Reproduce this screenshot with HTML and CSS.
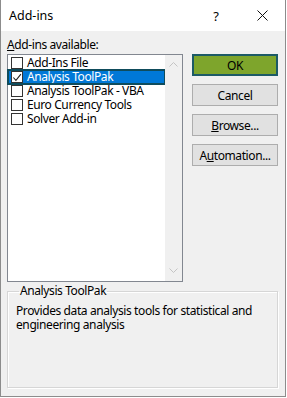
FILE: index.html
```html
<!DOCTYPE html>
<html>
<head>
<meta charset="utf-8">
<link rel="stylesheet" href="styles.css">
</head>
<body>
<div class="window">
  <div class="titlebar">
    <span class="title">Add-ins</span>
    <span class="help">?</span>
    <span class="close">
      <svg width="11" height="11" viewBox="0 0 11 11"><path d="M0.5 0.5 L10.5 10.5 M10.5 0.5 L0.5 10.5" stroke="#111" stroke-width="1" fill="none"/></svg>
    </span>
  </div>
  <div class="content">
    <div class="main">
      <div class="leftcol">
        <div class="label"><u>A</u>dd-ins available:</div>
        <div class="listbox">
          <div class="items">
            <div class="item"><span class="cb"></span><span>Add-Ins File</span></div>
            <div class="item selected"><span class="cb checked"><svg width="11" height="11" viewBox="0 0 11 11"><path d="M1.5 5.5 L4.3 8.6 L9.8 1.8" stroke="#222" stroke-width="1.2" fill="none"/></svg></span><span>Analysis ToolPak</span></div>
            <div class="item"><span class="cb"></span><span>Analysis ToolPak - VBA</span></div>
            <div class="item"><span class="cb"></span><span>Euro Currency Tools</span></div>
            <div class="item"><span class="cb"></span><span>Solver Add-in</span></div>
          </div>
          <div class="scrollbar">
            <svg class="arrow" width="9" height="5" viewBox="0 0 9 5"><path d="M0.5 4.5 L4.5 0.5 L8.5 4.5" stroke="#c4c4c4" stroke-width="1" fill="none"/></svg>
            <svg class="arrow" width="9" height="5" viewBox="0 0 9 5"><path d="M0.5 0.5 L4.5 4.5 L8.5 0.5" stroke="#c4c4c4" stroke-width="1" fill="none"/></svg>
          </div>
        </div>
      </div>
      <div class="buttons">
        <div class="btn default">OK</div>
        <div class="btn">Cancel</div>
        <div class="btn"><u>B</u>rowse...</div>
        <div class="btn">A<u>u</u>tomation...</div>
      </div>
    </div>
    <fieldset class="group">
      <legend>Analysis ToolPak</legend>
      <p class="desc">Provides data analysis tools for statistical and engineering analysis</p>
    </fieldset>
  </div>
</div>
</body>
</html>
```

FILE: styles.css
```css
* { box-sizing: border-box; }
html, body { margin: 0; padding: 0; background: #ffffff; }
body {
  font-family: "Noto Sans", "Open Sans", sans-serif;
  font-size: 12px;
  letter-spacing: -0.4px;
  color: #000;
  width: 287px;
  height: 398px;
  overflow: hidden;
}
.window {
  width: 286px;
  height: 397px;
  border-left: 1px solid #8c8c8c;
  border-right: 1px solid #8c8c8c;
  border-bottom: 1px solid #8c8c8c;
  display: flex;
  flex-direction: column;
  background: #f0f0f0;
}
.titlebar {
  height: 31px;
  background: #fff;
  display: flex;
  align-items: center;
  padding-left: 8px;
  font-size: 12.5px;
  letter-spacing: 0;
}
.title { flex: 1; }
.help { width: 14px; margin-right: 34px; text-align: center; font-size: 13px; }
.close { width: 11px; margin-right: 17px; display: flex; }
.content {
  flex: 1;
  padding: 6px 7px 0 6px;
  display: flex;
  flex-direction: column;
}
.main { display: flex; }
.leftcol { width: 176px; }
.label { height: 17px; line-height: 15px; }
.listbox {
  height: 228px;
  border: 1px solid #828790;
  background: #fff;
  display: flex;
}
.items { flex: 1; padding-top: 1px; }
.item {
  height: 14px;
  display: flex;
  align-items: center;
  padding-left: 3px;
  gap: 4px;
  white-space: nowrap;
  line-height: 14px;
}
.item.selected {
  background: #0078d7;
  color: #fff;
  outline: 2px solid #0f4c5c;
  outline-offset: -1px;
}
.cb {
  width: 12px;
  height: 12px;
  border: 1px solid #333;
  background: #fff;
  flex: none;
  display: flex;
  align-items: center;
  justify-content: center;
}
.scrollbar {
  width: 17px;
  background: #f0f0f0;
  display: flex;
  flex-direction: column;
  justify-content: space-between;
  align-items: center;
  padding: 7px 0 8px;
}
.buttons {
  margin-left: 9px;
  padding-top: 17px;
  display: flex;
  flex-direction: column;
  gap: 8px;
}
.btn {
  width: 86px;
  height: 22px;
  background: #e1e1e1;
  border: 1px solid #adadad;
  display: flex;
  align-items: center;
  justify-content: center;
}
.btn.default {
  background: #7ea52c;
  border: 2px solid #1c5a66;
}
.group {
  margin: 1px 0 0 0;
  padding: 0 8px;
  height: 105px;
  border: 1px solid #d6d6d6;
  box-shadow: inset 1px 1px 0 #fff, 1px 1px 0 #fff;
}
.group legend {
  padding: 0 1px;
  margin-left: 3px;
  line-height: 16px;
}
.desc {
  margin: 5px 0 0 0;
  line-height: 14px;
}
```
